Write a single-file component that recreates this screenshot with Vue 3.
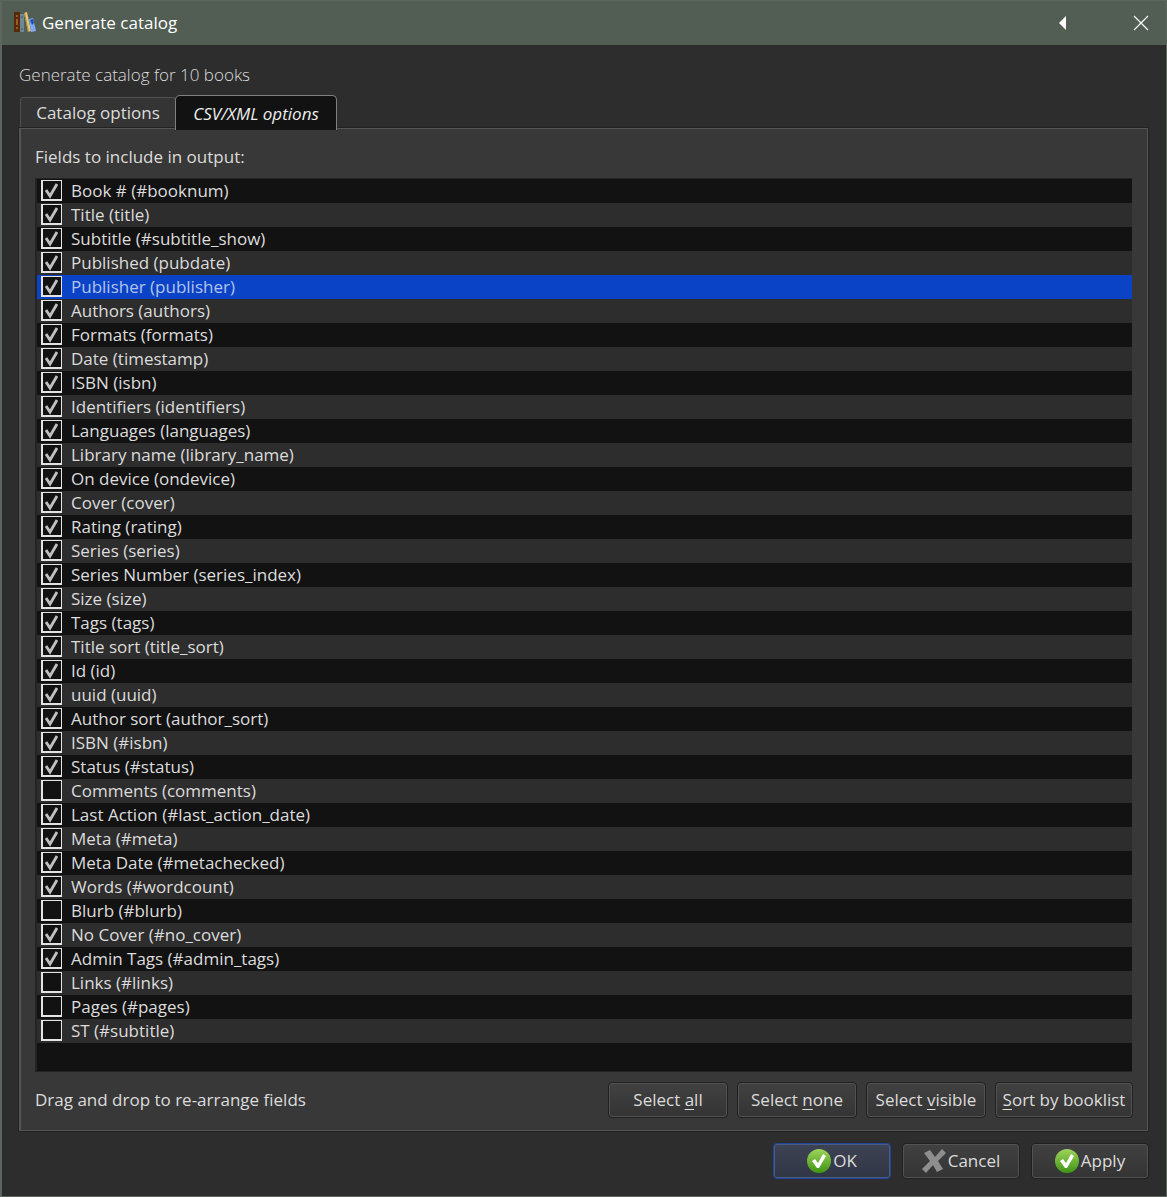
<script setup>
import { ref } from 'vue'

const fields = ref([
  ['Book #', '#booknum'], ['Title', 'title'], ['Subtitle', '#subtitle_show'],
  ['Published', 'pubdate'], ['Publisher', 'publisher'], ['Authors', 'authors'],
  ['Formats', 'formats'], ['Date', 'timestamp'], ['ISBN', 'isbn'],
  ['Identifiers', 'identifiers'], ['Languages', 'languages'],
  ['Library name', 'library_name'], ['On device', 'ondevice'], ['Cover', 'cover'],
  ['Rating', 'rating'], ['Series', 'series'], ['Series Number', 'series_index'],
  ['Size', 'size'], ['Tags', 'tags'], ['Title sort', 'title_sort'], ['Id', 'id'],
  ['uuid', 'uuid'], ['Author sort', 'author_sort'], ['ISBN', '#isbn'],
  ['Status', '#status'], ['Comments', 'comments', false],
  ['Last Action', '#last_action_date'], ['Meta', '#meta'],
  ['Meta Date', '#metachecked'], ['Words', '#wordcount'], ['Blurb', '#blurb', false],
  ['No Cover', '#no_cover'], ['Admin Tags', '#admin_tags'], ['Links', '#links', false],
  ['Pages', '#pages', false], ['ST', '#subtitle', false],
].map(([name, key, checked = true]) => ({ name, key, checked })))

const current = ref('publisher')

function setAll(value) {
  fields.value.forEach((f) => { f.checked = value })
}
</script>

<template>
  <div class="dialog">
    <header class="titlebar">
      <svg class="logo" viewBox="0 0 22 22" aria-hidden="true">
        <rect x="0" y="0" width="6" height="20" fill="#55290a" />
        <path d="M2 3h2v2H2zM2 7h2v6H2zM2 15h2v2H2z" fill="#9a5c22" />
        <rect x="6" y="2" width="4" height="18" fill="#6d8796" />
        <path d="M7 5h2M7 17h2" stroke="#40596a" />
        <path d="M10 1l3-1 4 19-3 1z" fill="#e3c77c" />
        <path d="M10 1l1 0 4 19-1 0z" fill="#a98a3c" />
        <path d="M15 7l4-1 3 13-5 1z" fill="#7eaaf3" />
        <path d="M16 8l3-1 1 4-2 2z" fill="#1c50b4" />
      </svg>
      <h1>Generate catalog</h1>
      <button class="winbtn collapse" aria-label="Collapse">
        <svg width="8" height="14" viewBox="0 0 8 14"><path d="M7 0v14L0 7z" fill="#fff" /></svg>
      </button>
      <button class="winbtn" aria-label="Close">
        <svg width="16" height="16" viewBox="0 0 16 16"><path d="M1 1l14 14M15 1L1 15" stroke="#fff" stroke-width="1.2" /></svg>
      </button>
    </header>

    <main class="content">
      <p class="summary">Generate catalog for 10 books</p>
      <div class="tabs" role="tablist">
        <button class="tab" role="tab" aria-selected="false">Catalog options</button>
        <button class="tab active" role="tab" aria-selected="true">CSV/XML options</button>
      </div>
      <section class="panel">
        <p class="caption">Fields to include in output:</p>
        <ul class="fields">
          <li
            v-for="f in fields"
            :key="f.key"
            :class="{ selected: f.key === current }"
            @click="current = f.key"
          >
            <label>
              <span class="box">
                <input v-model="f.checked" type="checkbox">
                <svg v-if="f.checked" viewBox="0 0 21 21" aria-hidden="true">
                  <path d="M5 10l4 6L16 4" fill="none" stroke="#c0c0c0" stroke-width="2.8" />
                </svg>
              </span>
              <span>{{ f.name }} ({{ f.key }})</span>
            </label>
          </li>
        </ul>
        <div class="tools">
          <p>Drag and drop to re-arrange fields</p>
          <button class="btn" @click="setAll(true)"><span>Select <u>a</u>ll</span></button>
          <button class="btn" @click="setAll(false)"><span>Select <u>n</u>one</span></button>
          <button class="btn"><span>Select <u>v</u>isible</span></button>
          <button class="btn sort"><span><u>S</u>ort by booklist</span></button>
        </div>
      </section>
      <footer class="actions">
        <button class="btn primary">
          <svg class="icon" viewBox="0 0 24 24" aria-hidden="true">
            <defs>
              <linearGradient id="green" x1="0" y1="0" x2="0" y2="1">
                <stop offset="0" stop-color="#9fd45c" /><stop offset="1" stop-color="#3f9414" />
              </linearGradient>
            </defs>
            <circle cx="12" cy="12" r="12" fill="url(#green)" />
            <path d="M5 12l3-2 3 4 5-9 3 2-7 12h-2z" fill="#fff" />
          </svg>
          <span>OK</span>
        </button>
        <button class="btn">
          <svg class="icon" viewBox="0 0 24 24" aria-hidden="true">
            <path d="M2 4l6-3 5 7 7-8 4 4-8 8 5 8-6 3-4-7-7 8-4-4 8-8z" fill="#8e8e8e" />
          </svg>
          <span>Cancel</span>
        </button>
        <button class="btn">
          <svg class="icon" viewBox="0 0 24 24" aria-hidden="true">
            <circle cx="12" cy="12" r="12" fill="url(#green)" />
            <path d="M5 12l3-2 3 4 5-9 3 2-7 12h-2z" fill="#fff" />
          </svg>
          <span>Apply</span>
        </button>
      </footer>
    </main>
  </div>
</template>

<style>
body {
  background: #2d2d2d;
}
</style>

<style scoped>
* {
  box-sizing: border-box;
}
.dialog {
  display: flex;
  flex-direction: column;
  min-height: 100vh;
  border: 1px solid #5c665c;
  border-left-width: 2px;
  background: #2d2d2d;
  color: #dcdcdc;
  font: 17px/24px "Open Sans", "Noto Sans", sans-serif;
}
h1,
p,
ul {
  margin: 0;
  padding: 0;
  font-size: inherit;
  font-weight: inherit;
}
button {
  font: inherit;
  color: inherit;
  padding: 0;
}
.titlebar {
  display: flex;
  align-items: center;
  height: 44px;
  padding-left: 12px;
  background: #525e53;
  color: #fff;
}
.titlebar h1 {
  flex: 1;
  margin-left: 6px;
}
.logo {
  width: 22px;
  height: 22px;
}
.winbtn {
  display: grid;
  place-items: center;
  width: 50px;
  height: 44px;
  border: 0;
  background: none;
}
.collapse {
  margin-right: 28px;
}
.content {
  flex: 1;
  display: flex;
  flex-direction: column;
  padding: 18px 17px 17px;
}
.summary {
  font-weight: 300;
}
.tabs {
  display: flex;
  align-items: flex-end;
  height: 40px;
  margin-top: 1px;
}
.tab {
  width: 156px;
  height: 31px;
  margin-left: 1px;
  border: 1px solid #505050;
  border-bottom: 0;
  border-radius: 3px 3px 0 0;
  background: #343434;
}
.tab.active {
  position: relative;
  width: 162px;
  height: 35px;
  margin: 0 0 -2px -1px;
  padding-top: 2px;
  border-color: #808080;
  border-radius: 5px 5px 0 0;
  background: #121212;
  color: #eee;
  font-style: italic;
}
.panel {
  flex: 1;
  display: flex;
  flex-direction: column;
  margin-right: 1px;
  padding: 16px 14px 12px;
  border: 1px solid #555;
  border-left-width: 2px;
  box-shadow: 0 0 0 1px #222;
  background: #383838;
}
.fields {
  flex: 1;
  margin: 9px 1px 0 0;
  border: 1px solid #242424;
  border-width: 1px 0 1px 2px;
  background: #121212;
  list-style: none;
}
.fields li:nth-child(even) {
  background: #2d2d2d;
}
.fields li.selected {
  background: #0a43c6;
  color: #b3c3ec;
}
.fields label {
  display: flex;
  gap: 9px;
  height: 24px;
  padding-left: 4px;
}
.box {
  display: grid;
  width: 21px;
  height: 21px;
  margin-top: 1px;
}
.box > * {
  grid-area: 1 / 1;
}
.box input {
  appearance: none;
  width: 21px;
  height: 21px;
  margin: 0;
  border: 1px solid #e4e4e4;
  border-width: 1px 1px 2px 2px;
  background: #121212;
}
.box svg {
  width: 21px;
  height: 21px;
  pointer-events: none;
}
.tools {
  display: flex;
  align-items: center;
  gap: 9px;
  margin-top: 10px;
}
.tools p {
  flex: 1;
}
.btn {
  display: flex;
  align-items: center;
  justify-content: center;
  min-width: 120px;
  height: 36px;
  border: 1px solid #202020;
  border-radius: 4px;
  box-shadow: inset 0 0 0 1px #525252;
  background: linear-gradient(#414141, #343434);
  white-space: nowrap;
}
.btn.sort {
  min-width: 138px;
}
.btn u {
  text-underline-offset: 3px;
}
.actions {
  display: flex;
  justify-content: flex-end;
  gap: 11px;
  margin-top: 12px;
}
.actions .btn {
  min-width: 118px;
}
.btn.primary {
  border-color: #1f469c;
  box-shadow: inset 0 0 0 1px #4a5a80;
  background: linear-gradient(#3d4354, #303644);
}
.icon {
  width: 24px;
  height: 24px;
  margin-right: 2px;
}
</style>
